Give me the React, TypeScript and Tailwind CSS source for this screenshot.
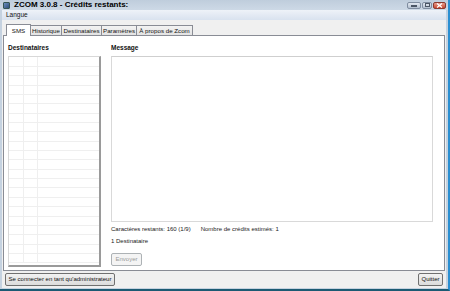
import React from "react";

const font = { fontFamily: '"Liberation Sans", Arial, sans-serif' };

function TitleButton({ kind }: { kind: "min" | "max" | "close" }) {
  if (kind === "close") {
    return (
      <div className="w-[13px] h-[7px] rounded-[2px] border border-[#8a3a30] bg-gradient-to-b from-[#e89a8a] to-[#c7452e] flex items-center justify-center">
        <svg width="7" height="5" viewBox="0 0 7 5">
          <path d="M1 0.5 L6 4.5 M6 0.5 L1 4.5" stroke="#fff" strokeWidth="1.3" />
        </svg>
      </div>
    );
  }
  return (
    <div
      className={`${kind === "min" ? "w-[14px]" : "w-[10px]"} h-[7px] rounded-[2px] border border-[#7f8da0] bg-gradient-to-b from-[#e3e9f1] to-[#b3c0d0] flex items-center justify-center`}
    >
      {kind === "min" ? (
        <div className="w-[6px] h-[1.5px] bg-[#4b5665] mt-[2px]" />
      ) : (
        <div className="w-[5px] h-[4px] border border-[#4b5665] border-t-[1.5px]" />
      )}
    </div>
  );
}

function Tab({ label, selected, w }: { label: string; selected?: boolean; w: string }) {
  if (selected) {
    return (
      <div className={`${w} h-[12px] -mb-px flex items-center justify-center bg-white border border-b-0 border-[#898c95] z-10 relative`}>
        <span className="text-[6.2px] text-[#111]">{label}</span>
      </div>
    );
  }
  return (
    <div className={`${w} h-[10px] flex items-center justify-center bg-gradient-to-b from-[#f3f3f3] to-[#e3e3e3] border border-b-0 border-[#898c95] -ml-px`}>
      <span className="text-[6.2px] text-[#111] whitespace-nowrap">{label}</span>
    </div>
  );
}

function Button({
  label,
  disabled,
  className = "",
}: {
  label: string;
  disabled?: boolean;
  className?: string;
}) {
  return (
    <div
      className={`h-[13px] flex items-center justify-center rounded-[2px] border ${
        disabled
          ? "border-[#adb2b5] bg-[#f4f4f4] text-[#9a9a9a]"
          : "border-[#707070] bg-gradient-to-b from-[#f2f2f2] to-[#dcdcdc] text-[#111]"
      } text-[6px] whitespace-nowrap ${className}`}
    >
      {label}
    </div>
  );
}

export default function App() {
  const rows = Array.from({ length: 22 });
  return (
    <div
      className="w-[450px] h-[291px] overflow-hidden flex flex-col bg-[#c5d2e0] border-r-[2px] border-b-[2px] border-r-[#2b8fd2] border-b-[#1c5a73]"
      style={font}
    >
      {/* Title bar */}
      <div className="h-[10px] flex items-center bg-gradient-to-b from-[#bfcddc] to-[#cdd9e6] pl-[3px] pr-[2px]">
        <div className="w-[7px] h-[7px] rounded-[1px] bg-gradient-to-br from-[#6a8fbf] to-[#2d4d7a] border border-[#335555] mr-[4px]" />
        <span className="text-[8px] font-bold text-[#000] leading-none">
          ZCOM 3.0.8 - Crédits restants:
        </span>
        <div className="ml-auto flex items-center gap-[1px]">
          <TitleButton kind="min" />
          <TitleButton kind="max" />
          <TitleButton kind="close" />
        </div>
      </div>

      <div className="flex-1 flex flex-col ml-[2px] mr-[2px] mb-[1px] bg-[#f0f0f0]">
        {/* Menu bar */}
        <div className="h-[10px] flex items-center px-[4px] bg-gradient-to-b from-[#eef2f8] to-[#d9e2ef]">
          <span className="text-[6.5px] text-[#111]">Langue</span>
        </div>

        {/* Tabs */}
        <div className="h-[15px] flex items-end pl-[4px] pt-[3px]">
          <Tab label="SMS" selected w="w-[25px]" />
          <Tab label="Historique" w="w-[32px]" />
          <Tab label="Destinataires" w="w-[41px]" />
          <Tab label="Paramètres" w="w-[36px]" />
          <Tab label="À propos de Zcom" w="w-[57px]" />
        </div>

        {/* Panel */}
        <div className="h-[236px] mx-[1px] bg-white border border-[#898c95] flex px-[4px] pt-[7px] pb-[3px] gap-[10px]">
          <div className="w-[93px] flex flex-col">
            <div className="text-[6.5px] font-bold text-[#111] h-[13px]">Destinataires</div>
            <div className="flex-1 border border-[#d8d8d8] border-r-[2px] border-b-[2px] border-r-[#9a9a9a] border-b-[#9a9a9a] overflow-hidden">
              {rows.map((_, i) => (
                <div
                  key={i}
                  className={`${i === 0 ? "h-[10px]" : "h-[9.35px]"} flex border-b border-[#efefef]`}
                >
                  <div className="w-[15px] border-r border-[#efefef]" />
                  <div className="w-[14px] border-r border-[#efefef]" />
                  <div className="flex-1" />
                </div>
              ))}
            </div>
          </div>

          <div className="w-[322px] flex flex-col">
            <div className="text-[6.5px] font-bold text-[#111] h-[13px]">Message</div>
            <div className="h-[166px] border border-[#d9d9d9] border-t-[#cfcfcf]" />
            <div className="flex items-center h-[12px] mt-[1px] text-[6px] text-[#222]">
              <span>Caractères restants: 160 (1/9)</span>
              <span className="ml-[10px]">Nombre de crédits estimés: 1</span>
            </div>
            <div className="h-[12px] flex items-center text-[6px] text-[#222]">1 Destinataire</div>
            <Button label="Envoyer" disabled className="w-[31px] mt-[6px]" />
          </div>
        </div>

        {/* Bottom buttons */}
        <div className="flex-1 flex items-center justify-between px-[3px]">
          <Button label="Se connecter en tant qu'administrateur" className="w-[110px]" />
          <Button label="Quitter" className="w-[25px]" />
        </div>
      </div>
    </div>
  );
}
